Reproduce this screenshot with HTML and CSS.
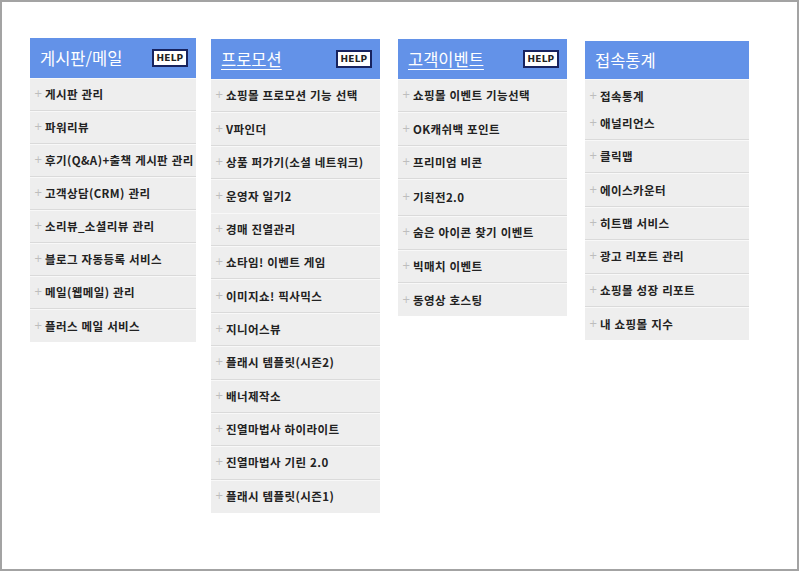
FILE: index.html
```html
<!DOCTYPE html>
<html lang="ko">

<head>
  <meta charset="UTF-8" />
  <meta name="viewport" content="width=device-width, initial-scale=1.0" />
  <title>부가서비스 메뉴</title>
  <link rel="stylesheet" href="styles.css">
</head>

<body>
  <div class="frame">
    <!-- 게시판/메일 -->
    <div class="menu menu-board">
      <div class="menu-head">
        <span class="menu-title">게시판/메일</span>
        <span class="help">HELP</span>
      </div>
      <ul class="menu-list">
        <li>게시판 관리</li>
        <li>파워리뷰</li>
        <li>후기(Q&amp;A)+출책 게시판 관리</li>
        <li>고객상담(CRM) 관리</li>
        <li>소리뷰_소셜리뷰 관리</li>
        <li>블로그 자동등록 서비스</li>
        <li>메일(웹메일) 관리</li>
        <li>플러스 메일 서비스</li>
      </ul>
    </div>

    <!-- 프로모션 -->
    <div class="menu menu-promo">
      <div class="menu-head">
        <span class="menu-title underline">프로모션</span>
        <span class="help">HELP</span>
      </div>
      <ul class="menu-list">
        <li>쇼핑몰 프로모션 기능 선택</li>
        <li>V파인더</li>
        <li>상품 퍼가기(소셜 네트워크)</li>
        <li class="joined">운영자 일기2</li>
        <li>경매 진열관리</li>
        <li>쇼타임! 이벤트 게임</li>
        <li>이미지쇼! 픽사믹스</li>
        <li>지니어스뷰</li>
        <li>플래시 템플릿(시즌2)</li>
        <li>배너제작소</li>
        <li>진열마법사 하이라이트</li>
        <li>진열마법사 기린 2.0</li>
        <li>플래시 템플릿(시즌1)</li>
      </ul>
    </div>

    <!-- 고객이벤트 -->
    <div class="menu menu-event">
      <div class="menu-head">
        <span class="menu-title underline">고객이벤트</span>
        <span class="help">HELP</span>
      </div>
      <ul class="menu-list">
        <li>쇼핑몰 이벤트 기능선택</li>
        <li>OK캐쉬백 포인트</li>
        <li>프리미엄 비콘</li>
        <li class="tall">기획전2.0</li>
        <li>숨은 아이콘 찾기 이벤트</li>
        <li>빅매치 이벤트</li>
        <li>동영상 호스팅</li>
      </ul>
    </div>

    <!-- 접속통계 -->
    <div class="menu menu-stats">
      <div class="menu-head">
        <span class="menu-title">접속통계</span>
      </div>
      <ul class="menu-list">
        <li class="joined first">접속통계</li>
        <li class="second">애널리언스</li>
        <li>클릭맵</li>
        <li>에이스카운터</li>
        <li>히트맵 서비스</li>
        <li>광고 리포트 관리</li>
        <li>쇼핑몰 성장 리포트</li>
        <li>내 쇼핑몰 지수</li>
      </ul>
    </div>
  </div>
</body>

</html>
```

FILE: styles.css
```css
* {
  box-sizing: border-box;
}

body {
  margin: 0;
  background: #fff;
  font-family: "Noto Sans CJK KR", "Noto Sans", sans-serif;
}

.frame {
  width: 799px;
  height: 571px;
  border: 2px solid #a3a3a3;
  display: flex;
  align-items: flex-start;
  padding: 36px 0 0 28px;
}

.menu {
  background: #eeeeee;
}

.menu-board {
  width: 166px;
}

.menu-promo {
  width: 169px;
  margin: 1px 0 0 15px;
}

.menu-event {
  width: 169px;
  margin: 1px 0 0 18px;
}

.menu-stats {
  width: 164px;
  margin: 3px 0 0 18px;
}

.menu-head {
  height: 40px;
  background: #6392e8;
  display: flex;
  align-items: center;
  justify-content: space-between;
  padding: 0 8px 0 10px;
}

.menu-stats .menu-head {
  height: 38px;
}

.menu-title {
  color: #fff;
  font-size: 16.5px;
  font-weight: 400;
}

.menu-title.underline {
  text-decoration: underline;
  text-underline-offset: 3px;
  text-decoration-thickness: 1px;
}

.help {
  width: 36px;
  height: 18px;
  background: #fff;
  border: 2px solid #17235f;
  color: #222;
  font-family: "DejaVu Sans", sans-serif;
  font-size: 9px;
  font-weight: 700;
  display: flex;
  align-items: center;
  justify-content: center;
  letter-spacing: 0.2px;
}

.menu-list {
  margin: 0;
  padding: 0;
  list-style: none;
}

.menu-list li {
  height: 33.4px;
  display: flex;
  align-items: center;
  padding-left: 15px;
  position: relative;
  font-size: 11.5px;
  font-weight: 700;
  color: #222;
  letter-spacing: 0.4px;
  border-bottom: 1px solid #dadada;
  box-shadow: inset 0 1px 0 #f8f8f8;
}

/* 작은 + 표시 */
.menu-list li::before {
  content: "+";
  position: absolute;
  left: 4px;
  top: 50%;
  transform: translateY(-52%);
  font-family: "DejaVu Sans", sans-serif;
  font-size: 10px;
  font-weight: 400;
  color: #bdbdbd;
}

.menu-list li:last-child {
  border-bottom: none;
}

.menu-board .menu-list li {
  height: 33px;
}

.menu-list li.joined {
  border-bottom: none;
}

.menu-event .menu-list li.tall {
  height: 37px;
}

.menu-stats .menu-list li.first {
  height: 34px;
}

.menu-stats .menu-list li.second {
  height: 27px;
  padding-bottom: 7px;
  box-shadow: none;
}

.menu-stats .menu-list li.second::before {
  transform: translateY(-85%);
}
```
